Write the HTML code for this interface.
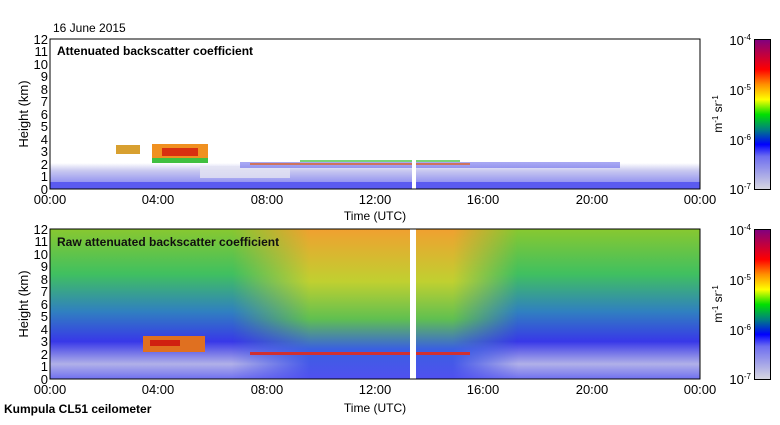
<!DOCTYPE html>
<html><head><style>
body{margin:0;background:#fff;width:780px;height:420px;overflow:hidden;font-family:"Liberation Sans",sans-serif}
</style></head><body>
<svg width="780" height="420" xmlns="http://www.w3.org/2000/svg" font-family="Liberation Sans, sans-serif">
<defs>
<linearGradient id="cb" x1="0" y1="1" x2="0" y2="0">
<stop offset="0" stop-color="#d8d8e0"/><stop offset="0.22" stop-color="#6e6ef0"/><stop offset="0.3" stop-color="#0000ff"/><stop offset="0.4" stop-color="#008080"/><stop offset="0.5" stop-color="#00e000"/><stop offset="0.6" stop-color="#ffff00"/><stop offset="0.7" stop-color="#ff9000"/><stop offset="0.8" stop-color="#ff0000"/><stop offset="0.9" stop-color="#c00040"/><stop offset="1" stop-color="#800080"/>
</linearGradient>
<linearGradient id="low" x1="0" y1="0" x2="0" y2="1">
<stop offset="0" stop-color="#ffffff"/><stop offset="0.3" stop-color="#c8c8f0"/><stop offset="0.7" stop-color="#9a9af0"/><stop offset="1" stop-color="#6060f0"/>
</linearGradient>
<linearGradient id="bv" x1="0" y1="0" x2="0" y2="1">
<stop offset="0" stop-color="#88c830"/><stop offset="0.3" stop-color="#40c060"/><stop offset="0.55" stop-color="#3080c0"/><stop offset="0.75" stop-color="#3838e8"/><stop offset="0.9" stop-color="#b0b0e8"/><stop offset="1" stop-color="#7070f0"/>
</linearGradient>
<linearGradient id="mid" x1="0" y1="0" x2="0" y2="1">
<stop offset="0" stop-color="#f0a030"/><stop offset="0.35" stop-color="#c0d030"/><stop offset="0.6" stop-color="#60c050"/><stop offset="0.8" stop-color="#3a60e0"/><stop offset="1" stop-color="#5050f0"/>
</linearGradient>
<linearGradient id="hm" x1="0" y1="0" x2="1" y2="0">
<stop offset="0" stop-color="#fff" stop-opacity="0"/><stop offset="0.28" stop-color="#fff" stop-opacity="0"/><stop offset="0.4" stop-color="#fff" stop-opacity="1"/><stop offset="0.62" stop-color="#fff" stop-opacity="1"/><stop offset="0.72" stop-color="#fff" stop-opacity="0"/><stop offset="1" stop-color="#fff" stop-opacity="0"/>
</linearGradient>
<mask id="mk"><rect x="50" y="229" width="650" height="150" fill="url(#hm)"/></mask>
</defs>
<text x="53" y="32" font-size="12">16 June 2015</text>
<!-- top plot -->
<rect x="50" y="39" width="650" height="150" fill="#fff"/>
<rect x="50" y="163" width="650" height="26" fill="url(#low)"/>
<rect x="50" y="182" width="650" height="7" fill="#5a5af0"/>
<rect x="200" y="166" width="90" height="12" fill="#e4e4f2" opacity="0.8"/>
<rect x="240" y="162" width="380" height="6" fill="#5050e8" opacity="0.5"/>
<rect x="250" y="163" width="220" height="2" fill="#e06020" opacity="0.7"/>
<rect x="300" y="160" width="160" height="2" fill="#40c040" opacity="0.7"/>
<rect x="116" y="145" width="24" height="9" fill="#d8a030"/>
<rect x="152" y="144" width="56" height="16" fill="#f09020"/>
<rect x="162" y="148" width="36" height="8" fill="#d83010"/>
<rect x="152" y="158" width="56" height="5" fill="#40c040"/>
<rect x="412" y="160" width="4" height="29" fill="#fff"/>
<rect x="50" y="39" width="650" height="150" fill="none" stroke="#000"/>
<text x="57" y="55" font-size="12" font-weight="bold">Attenuated backscatter coefficient</text>
<!-- bottom plot -->
<rect x="50" y="229" width="650" height="150" fill="url(#bv)"/>
<rect x="50" y="229" width="650" height="150" fill="url(#mid)" mask="url(#mk)"/>
<rect x="143" y="336" width="62" height="16" fill="#e07020"/>
<rect x="150" y="340" width="30" height="6" fill="#d02010"/>
<rect x="250" y="352" width="220" height="3" fill="#d03030"/>
<rect x="410" y="229" width="6" height="150" fill="#fff"/>
<rect x="50" y="229" width="650" height="150" fill="none" stroke="#000"/>
<text x="57" y="246" font-size="12" font-weight="bold" fill="#101010">Raw attenuated backscatter coefficient</text>
<g font-size="13" text-anchor="end">
<text x="48" y="44">12</text><text x="48" y="56">11</text><text x="48" y="69">10</text><text x="48" y="81">9</text><text x="48" y="94">8</text><text x="48" y="106">7</text><text x="48" y="119">6</text><text x="48" y="131">5</text><text x="48" y="144">4</text><text x="48" y="156">3</text><text x="48" y="169">2</text><text x="48" y="181">1</text><text x="48" y="194">0</text>
<text x="48" y="234">12</text><text x="48" y="246">11</text><text x="48" y="259">10</text><text x="48" y="271">9</text><text x="48" y="284">8</text><text x="48" y="296">7</text><text x="48" y="309">6</text><text x="48" y="321">5</text><text x="48" y="334">4</text><text x="48" y="346">3</text><text x="48" y="359">2</text><text x="48" y="371">1</text><text x="48" y="384">0</text>
</g>
<g font-size="13" text-anchor="middle">
<text x="50" y="204">00:00</text><text x="158" y="204">04:00</text><text x="267" y="204">08:00</text><text x="375" y="204">12:00</text><text x="483" y="204">16:00</text><text x="592" y="204">20:00</text><text x="700" y="204">00:00</text>
<text x="375" y="220" font-size="12">Time (UTC)</text>
<text x="50" y="394">00:00</text><text x="158" y="394">04:00</text><text x="267" y="394">08:00</text><text x="375" y="394">12:00</text><text x="483" y="394">16:00</text><text x="592" y="394">20:00</text><text x="700" y="394">00:00</text>
<text x="375" y="412" font-size="12">Time (UTC)</text>
</g>
<text transform="translate(28,114) rotate(-90)" font-size="13" text-anchor="middle">Height (km)</text>
<text transform="translate(28,304) rotate(-90)" font-size="13" text-anchor="middle">Height (km)</text>
<text x="4" y="413" font-size="12" font-weight="bold">Kumpula CL51 ceilometer</text>
<rect x="754.5" y="39.5" width="16" height="150" fill="url(#cb)" stroke="#000"/>
<rect x="754.5" y="229.5" width="16" height="150" fill="url(#cb)" stroke="#000"/>
<g font-size="13" text-anchor="end">
<text x="751" y="45">10<tspan font-size="8" dy="-5">-4</tspan></text>
<text x="751" y="95">10<tspan font-size="8" dy="-5">-5</tspan></text>
<text x="751" y="145">10<tspan font-size="8" dy="-5">-6</tspan></text>
<text x="751" y="194">10<tspan font-size="8" dy="-5">-7</tspan></text>
<text x="751" y="235">10<tspan font-size="8" dy="-5">-4</tspan></text>
<text x="751" y="285">10<tspan font-size="8" dy="-5">-5</tspan></text>
<text x="751" y="335">10<tspan font-size="8" dy="-5">-6</tspan></text>
<text x="751" y="384">10<tspan font-size="8" dy="-5">-7</tspan></text>
</g>
<text transform="translate(722,114) rotate(-90)" font-size="12" text-anchor="middle">m<tspan font-size="8" dy="-4">-1</tspan><tspan dy="4"> sr</tspan><tspan font-size="8" dy="-4">-1</tspan></text>
<text transform="translate(722,304) rotate(-90)" font-size="12" text-anchor="middle">m<tspan font-size="8" dy="-4">-1</tspan><tspan dy="4"> sr</tspan><tspan font-size="8" dy="-4">-1</tspan></text>
</svg>
</body></html>
